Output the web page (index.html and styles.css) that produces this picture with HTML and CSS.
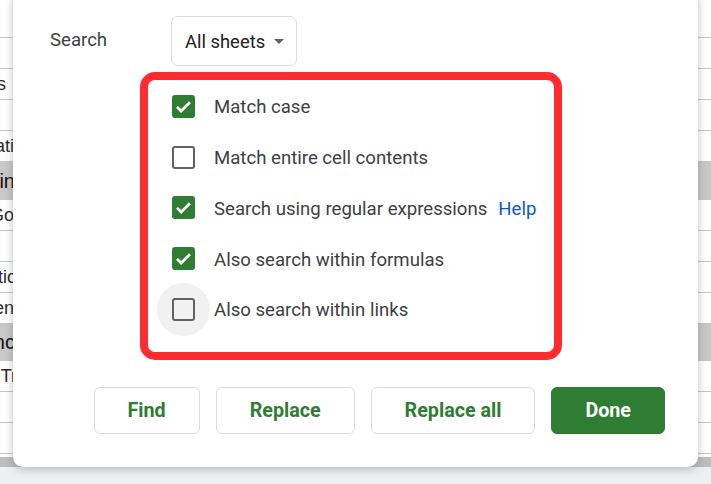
FILE: index.html
```html
<!DOCTYPE html>
<html>
<head>
<meta charset="utf-8">
<link rel="stylesheet" href="styles.css">
</head>
<body>
<div class="sheet">
  <div class="row r0"></div>
  <div class="row"></div>
  <div class="row"><span class="cell e6">Columns</span></div>
  <div class="row"></div>
  <div class="row"><span class="cell e14">Locati</span></div>
  <div class="row sel"><span class="cell big e15">Fin</span></div>
  <div class="row"><span class="cell e14">Go</span></div>
  <div class="row"></div>
  <div class="row"><span class="cell e16">Practic</span></div>
  <div class="row"><span class="cell e14">Ten</span></div>
  <div class="row sel tall"><span class="cell big e15">Inc</span></div>
  <div class="row"><span class="cell e27">Tra</span></div>
  <div class="row"></div>
  <div class="row"></div>
  <div class="scrollbar"></div>
</div>

<div class="dialog">
  <div class="search-row">
    <span class="search-label">Search</span>
    <div class="dropdown">
      <span>All sheets</span>
      <span class="caret"></span>
    </div>
  </div>

  <div class="options">
    <div class="opt">
      <span class="hit"><span class="box checked"><svg viewBox="0 0 24 24"><path d="M5.2 12.4l4.3 4.3 9.2-9.2" /></svg></span></span>
      <span class="label">Match case</span>
    </div>
    <div class="opt">
      <span class="hit"><span class="box"></span></span>
      <span class="label">Match entire cell contents</span>
    </div>
    <div class="opt">
      <span class="hit"><span class="box checked"><svg viewBox="0 0 24 24"><path d="M5.2 12.4l4.3 4.3 9.2-9.2" /></svg></span></span>
      <span class="label">Search using regular expressions</span>
      <a class="help">Help</a>
    </div>
    <div class="opt">
      <span class="hit"><span class="box checked"><svg viewBox="0 0 24 24"><path d="M5.2 12.4l4.3 4.3 9.2-9.2" /></svg></span></span>
      <span class="label">Also search within formulas</span>
    </div>
    <div class="opt">
      <span class="hit hover"><span class="box"></span></span>
      <span class="label">Also search within links</span>
    </div>
  </div>

  <div class="buttons">
    <button class="btn">Find</button>
    <button class="btn">Replace</button>
    <button class="btn">Replace all</button>
    <button class="btn primary">Done</button>
  </div>
</div>
</body>
</html>
```

FILE: styles.css
```css
* { box-sizing: border-box; }
html, body { margin: 0; padding: 0; }
body {
  width: 711px;
  height: 484px;
  overflow: hidden;
  position: relative;
  background: #eeeff1;
  font-family: "Liberation Sans", Arial, sans-serif;
}

.sheet {
  display: flex;
  flex-direction: column;
  background: #ffffff;
  height: 467px;
}
.row {
  height: 31px;
  border-bottom: 1px solid #c4c4c4;
  display: flex;
  align-items: center;
  flex: none;
}
.row.r0 { height: 38px; }
.row.sel { background: #c8c8c8; height: 38px; border-bottom: none; }
.row.tall { height: 37px; }
.cell {
  width: 44px;
  display: flex;
  justify-content: flex-end;
  overflow: hidden;
  white-space: nowrap;
  font-size: 18px;
  color: #2a2a2a;
}
.cell.e6 { padding-right: 38px; }
.cell.e14 { padding-right: 30px; }
.cell.e15 { padding-right: 29px; }
.cell.e16 { padding-right: 28px; }
.cell.e27 { padding-right: 17px; }
.cell.big { font-size: 20px; color: #111; }
.scrollbar {
  margin-top: 3px;
  height: 10px;
  background: #bdbdbd;
}

.dialog {
  position: absolute;
  left: 13px;
  top: -10px;
  width: 685px;
  height: 477px;
  background: #fff;
  border-radius: 10px;
  box-shadow: 0 3px 10px rgba(60, 64, 67, 0.22), 0 0 6px rgba(60, 64, 67, 0.12);
  font-family: Roboto, "Liberation Sans", sans-serif;
  padding: 26px 33px 33px 37px;
  display: flex;
  flex-direction: column;
}

.search-row {
  display: flex;
  align-items: center;
  height: 50px;
}
.search-label {
  width: 121px;
  font-size: 18.6px;
  color: #3c4043;
  margin-top: -2px;
}
.dropdown {
  height: 50px;
  width: 126px;
  border: 1px solid #dadce0;
  border-radius: 7px;
  display: flex;
  align-items: center;
  padding-left: 13px;
  font-size: 18.4px;
  color: #202124;
  gap: 9px;
}
.caret {
  width: 0;
  height: 0;
  border-left: 5.5px solid transparent;
  border-right: 5.5px solid transparent;
  border-top: 5.5px solid #5f6368;
}

.options {
  margin-top: 6px;
  margin-left: 90px;
  width: 422px;
  height: 288px;
  border: 8px solid #fe2b2f;
  border-radius: 15px;
  padding: 1px 0 0 9px;
  display: flex;
  flex-direction: column;
}
.opt {
  height: 50.75px;
  display: flex;
  align-items: center;
  flex: none;
}
.hit {
  width: 53px;
  height: 53px;
  border-radius: 50%;
  display: flex;
  align-items: center;
  justify-content: center;
  flex: none;
  margin-right: 4px;
}
.hit.hover { background: #f1f1f1; }
.box {
  width: 23px;
  height: 23px;
  border: 2px solid #5f6368;
  border-radius: 3px;
  position: relative;
  flex: none;
}
.box.checked {
  background: #2e7d32;
  border-color: #2e7d32;
}
.box svg {
  position: absolute;
  left: -2px;
  top: -2px;
  width: 23px;
  height: 23px;
}
.box svg path {
  fill: none;
  stroke: #fff;
  stroke-width: 2.8;
}
.label {
  font-size: 18.6px;
  color: #3c4043;
  white-space: nowrap;
  padding-top: 2px;
}
.help {
  margin-left: 11px;
  font-size: 18.6px;
  color: #0b57d0;
  padding-top: 2px;
}

.buttons {
  margin-top: 27px;
  display: flex;
  justify-content: flex-end;
  gap: 16px;
}
.btn {
  height: 47px;
  padding: 0 33px;
  border: 1px solid #dadce0;
  border-radius: 6px;
  background: #fff;
  font-family: Roboto, "Liberation Sans", sans-serif;
  font-size: 19.7px;
  font-weight: 700;
  color: #2e7d32;
}
.btn.primary {
  background: #2e7d32;
  border-color: #2e7d32;
  color: #fff;
}
```
